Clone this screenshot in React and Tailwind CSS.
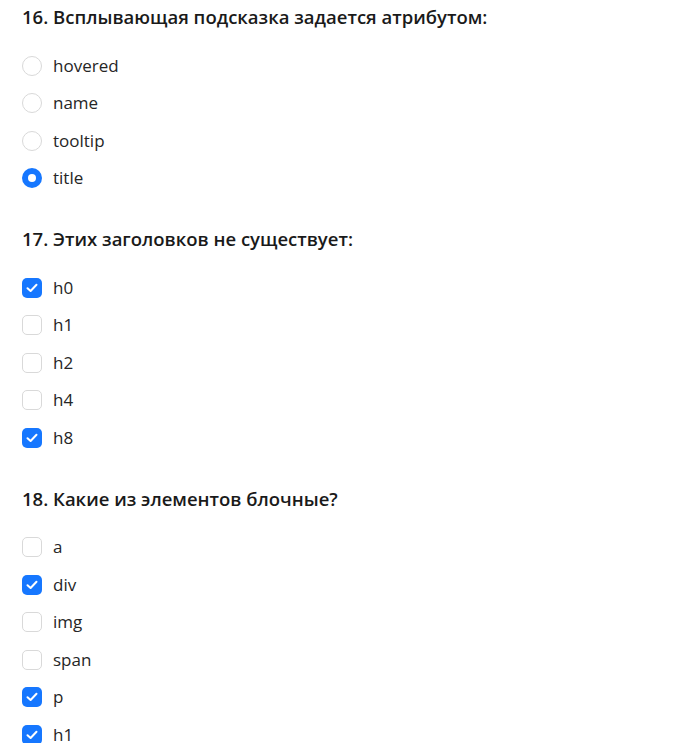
import React from "react";

const questions = [
  {
    title: "16. Всплывающая подсказка задается атрибутом:",
    type: "radio",
    options: [
      ["hovered", false],
      ["name", false],
      ["tooltip", false],
      ["title", true],
    ],
  },
  {
    title: "17. Этих заголовков не существует:",
    type: "checkbox",
    options: [
      ["h0", true],
      ["h1", false],
      ["h2", false],
      ["h4", false],
      ["h8", true],
    ],
  },
  {
    title: "18. Какие из элементов блочные?",
    type: "checkbox",
    options: [
      ["a", false],
      ["div", true],
      ["img", false],
      ["span", false],
      ["p", true],
      ["h1", true],
    ],
  },
];

function Radio({ checked }) {
  if (checked) {
    return (
      <span className="flex h-5 w-5 shrink-0 items-center justify-center rounded-full bg-[#1677ff]">
        <span className="h-2 w-2 rounded-full bg-white" />
      </span>
    );
  }
  return <span className="h-5 w-5 shrink-0 rounded-full border border-[#d9d9d9] bg-white" />;
}

function Checkbox({ checked }) {
  if (checked) {
    return (
      <span className="flex h-5 w-5 shrink-0 items-center justify-center rounded-[5px] bg-[#1677ff]">
        <svg width="12" height="10" viewBox="0 0 12 10" fill="none">
          <path d="M1.5 5.2L4.6 8L10.5 1.8" stroke="white" strokeWidth="2" strokeLinecap="round" strokeLinejoin="round" />
        </svg>
      </span>
    );
  }
  return <span className="h-5 w-5 shrink-0 rounded-[5px] border border-[#d9d9d9] bg-white" />;
}

export default function App() {
  return (
    <div
      className="h-[743px] w-[677px] overflow-hidden bg-white pl-[22px] pt-[5px] text-[#1f1f1f]"
      style={{ fontFamily: '"Open Sans", "Noto Sans", Arial, sans-serif' }}
    >
      {questions.map((q, qi) => (
        <div key={qi} className="mb-[30px]">
          <div className="h-6 text-[18.5px] font-semibold leading-6 text-[#1a1a1a]">{q.title}</div>
          <div className="mt-[18px] flex flex-col">
            {q.options.map(([label, checked]) => (
              <label key={label} className="flex h-[37.5px] items-center gap-[11px]">
                {q.type === "radio" ? <Radio checked={checked} /> : <Checkbox checked={checked} />}
                <span className="text-[17px] leading-6 text-[#262626]">{label}</span>
              </label>
            ))}
          </div>
        </div>
      ))}
    </div>
  );
}
